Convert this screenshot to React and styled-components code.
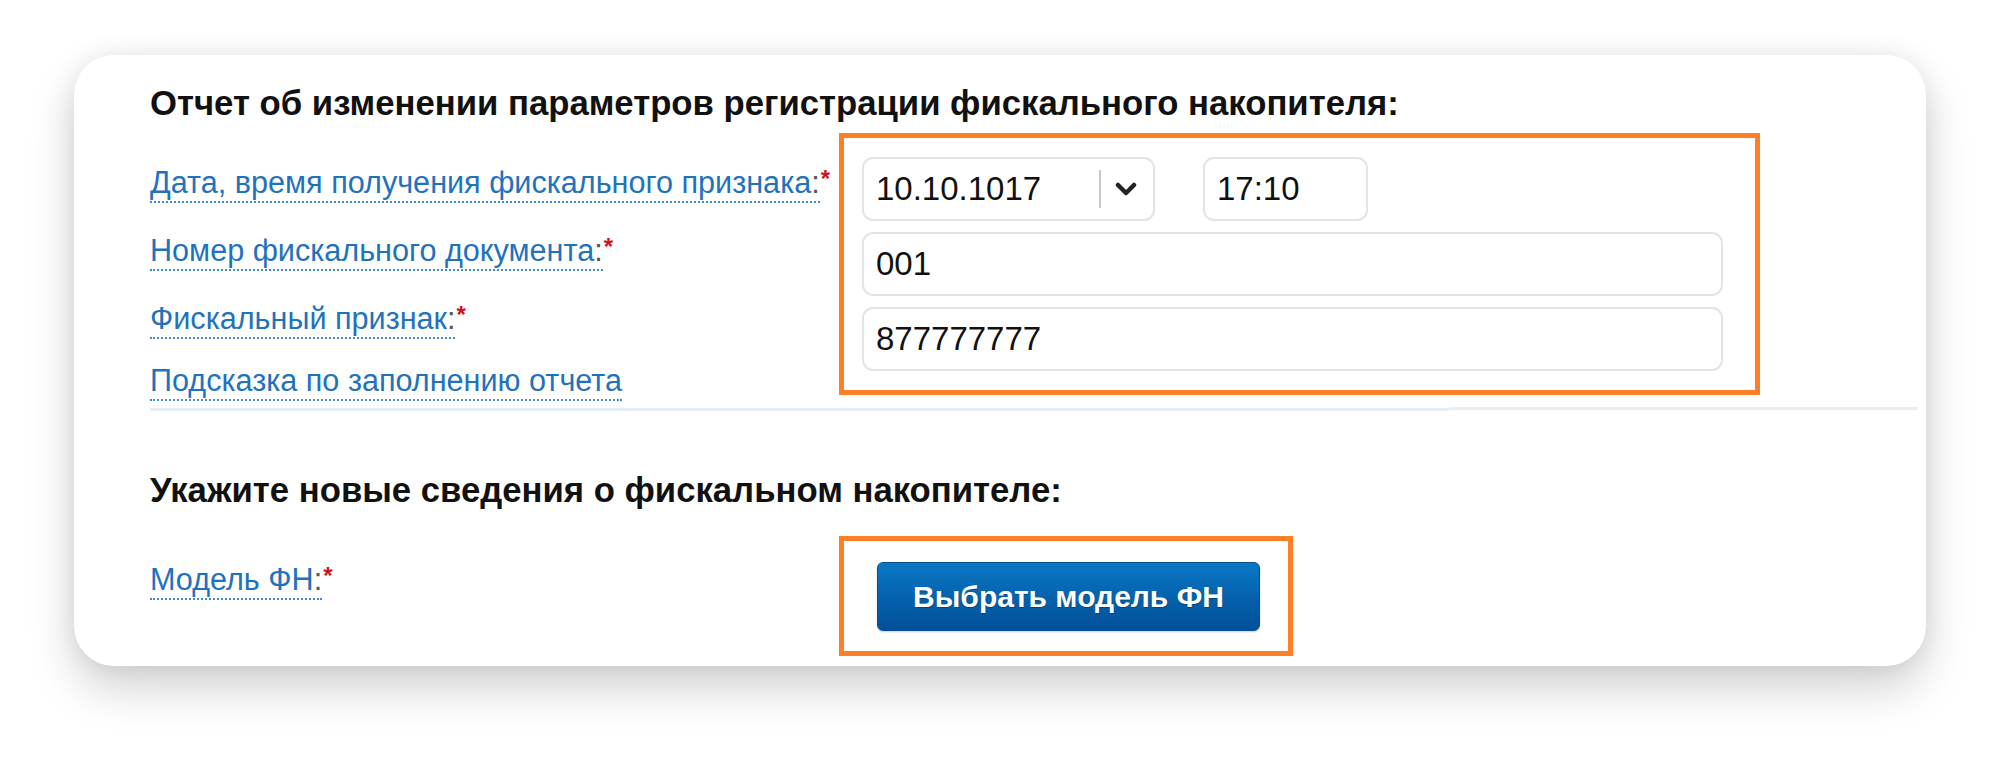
import React from 'react';
import styled, { createGlobalStyle } from 'styled-components';

const GlobalStyle = createGlobalStyle`
  html, body {
    margin: 0;
    padding: 0;
    background: #ffffff;
  }
  body {
    font-family: "Liberation Sans", Arial, sans-serif;
  }
`;

const Page = styled.div`
  width: 1999px;
  height: 761px;
  padding: 55px 0 0 74px;
  box-sizing: border-box;
  overflow: hidden;
`;

const Card = styled.div`
  width: 1852px;
  box-sizing: border-box;
  padding: 33px 8px 10px 76px;
  background: #ffffff;
  border-radius: 40px;
  box-shadow: 0 22px 46px rgba(0, 0, 0, 0.18), 0 0 24px rgba(0, 0, 0, 0.07);
  display: flex;
  flex-direction: column;
`;

const SectionTitle = styled.h2`
  margin: ${(p) => p.$top || 0}px 0 ${(p) => p.$bottom || 0}px;
  font-size: 34.7px;
  line-height: 30px;
  font-weight: bold;
  color: #111;
  white-space: nowrap;
`;

const FormRow = styled.div`
  display: grid;
  grid-template-columns: 689px auto;
  align-items: start;
`;

const LabelColumn = styled.div`
  display: flex;
  flex-direction: column;
  align-items: flex-start;
  gap: 38px;
  padding-top: ${(p) => p.$top}px;
`;

const FieldLabel = styled.div`
  font-size: 30.6px;
  line-height: 30px;
  white-space: nowrap;
  margin-top: ${(p) => p.$shift || 0}px;
`;

const LabelLink = styled.a`
  color: #1f72bd;
  text-decoration: none;
  border-bottom: 2px dotted #3f8ad0;
  padding-bottom: 2px;
`;

const Colon = styled.span`
  color: #555;
`;

const Required = styled.sup`
  color: #d0101b;
  font-size: 24px;
  font-weight: bold;
  vertical-align: top;
  line-height: 24px;
  margin-left: 1px;
`;

const Highlight = styled.div`
  border: 5px solid #ff7f27;
  box-sizing: border-box;
  width: ${(p) => p.$width}px;
  padding: ${(p) => p.$padding};
  display: flex;
  flex-direction: column;
  gap: 11px;
`;

const InlineFields = styled.div`
  display: flex;
  gap: 48px;
`;

const FieldBox = styled.div`
  height: 64px;
  width: ${(p) => (p.$width ? `${p.$width}px` : 'auto')};
  box-sizing: border-box;
  border: 2px solid #dfe5ea;
  border-radius: 11px;
  background: #fff;
  display: flex;
  align-items: center;
  padding-left: 12px;
  font-size: 33px;
  color: #111;
`;

const FieldValue = styled.span`
  flex: 1;
  white-space: nowrap;
`;

const SelectToggle = styled.span`
  display: flex;
  align-items: center;
  height: 38px;
  padding: 0 16px 0 14px;
  border-left: 2px solid #c8c8c8;
`;

const Divider = styled.div`
  display: flex;
  align-items: flex-start;
  height: 4px;
  margin: 12px 0 0;
`;

const DividerPart = styled.div`
  flex: ${(p) => p.$grow};
  height: 3px;
  margin-top: ${(p) => p.$offset}px;
  background: #e6eef6;
`;

const PrimaryButton = styled.button`
  width: 383px;
  height: 69px;
  border: 1px solid #0a4f91;
  border-radius: 6px;
  background: linear-gradient(to bottom, #0a78c4 0%, #0562ae 50%, #034f99 100%);
  color: #fff;
  font-family: "Liberation Sans", Arial, sans-serif;
  font-size: 30px;
  font-weight: bold;
  text-shadow: 0 1px 1px rgba(0, 0, 0, 0.25);
  box-shadow: 0 1px 2px rgba(0, 0, 0, 0.2);
  cursor: pointer;
`;

const Chevron = () => (
  <svg width="22" height="14" viewBox="0 0 22 14">
    <path d="M3 3 L11 11 L19 3" fill="none" stroke="#222" strokeWidth="4.5" strokeLinecap="round" strokeLinejoin="round" />
  </svg>
);

const Label = ({ text, required, shift }) => (
  <FieldLabel $shift={shift}>
    <LabelLink href="#">
      {text}
      {required && <Colon>:</Colon>}
    </LabelLink>
    {required && <Required>*</Required>}
  </FieldLabel>
);

export default function App () {
  return (
    <>
      <GlobalStyle />
      <Page>
        <Card>
          <SectionTitle $bottom={15}>Отчет об изменении параметров регистрации фискального накопителя:</SectionTitle>
          <FormRow>
            <LabelColumn $top={34}>
              <Label text="Дата, время получения фискального признака" required />
              <Label text="Номер фискального документа" required />
              <Label text="Фискальный признак" required />
              <Label text="Подсказка по заполнению отчета" shift={-6} />
            </LabelColumn>
            <Highlight $width={921} $padding="19px 32px 19px 18px">
              <InlineFields>
                <FieldBox $width={293}>
                  <FieldValue>10.10.1017</FieldValue>
                  <SelectToggle>
                    <Chevron />
                  </SelectToggle>
                </FieldBox>
                <FieldBox $width={165}>
                  <FieldValue>17:10</FieldValue>
                </FieldBox>
              </InlineFields>
              <FieldBox>
                <FieldValue>001</FieldValue>
              </FieldBox>
              <FieldBox>
                <FieldValue>877777777</FieldValue>
              </FieldBox>
            </Highlight>
          </FormRow>
          <Divider>
            <DividerPart $grow={1299} $offset={1} />
            <DividerPart $grow={469} $offset={0} />
          </Divider>
          <SectionTitle $top={64} $bottom={31}>Укажите новые сведения о фискальном накопителе:</SectionTitle>
          <FormRow>
            <LabelColumn $top={28}>
              <Label text="Модель ФН" required />
            </LabelColumn>
            <Highlight $width={454} $padding="21px 33px 20px 33px">
              <PrimaryButton type="button">Выбрать модель ФН</PrimaryButton>
            </Highlight>
          </FormRow>
        </Card>
      </Page>
    </>
  );
}
